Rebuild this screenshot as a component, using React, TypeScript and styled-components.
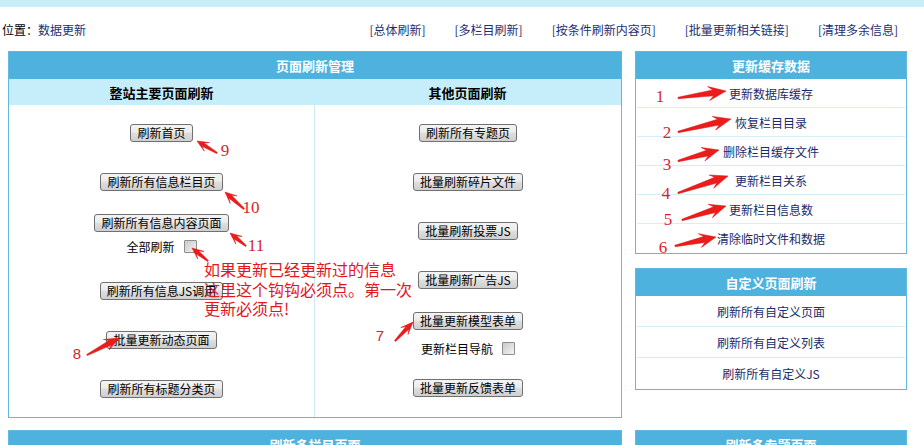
import React from "react";
import styled, { createGlobalStyle } from "styled-components";

const Global = createGlobalStyle`
  html, body { margin: 0; padding: 0; background: #fff; }
  body {
    font-family: "Noto Sans CJK SC", "Noto Sans", sans-serif;
    font-size: 12px;
    color: #000;
  }
`;

const Page = styled.div`
  position: relative;
  width: 924px;
  min-height: 445px;
  overflow: hidden;
`;

const TopBand = styled.div`
  height: 7px;
  background: #c8eef9;
`;

const LocationBar = styled.div`
  height: 44px;
  display: flex;
  align-items: center;
  justify-content: space-between;
  padding: 0 26px 0 2px;
`;

const Location = styled.div`
  font-size: 12px;
  color: #000;
`;

const NavLink = styled.a`
  color: #1a2f72;
  text-decoration: none;
  font-size: 12px;
  cursor: pointer;
`;

const Nav = styled.nav`
  display: flex;
  gap: 29px;
`;

const Row = styled.div<{ $gap?: number }>`
  display: flex;
  align-items: flex-start;
  gap: 13px;
  padding-left: 8px;
  margin-top: ${(p) => p.$gap ?? 0}px;
`;

const Panel = styled.section<{ $w: number }>`
  width: ${(p) => p.$w}px;
  box-sizing: border-box;
  border: 1px solid #62b8de;
  background: #fff;
`;

const PanelHeader = styled.div`
  height: 27px;
  background: #4eb2de;
  color: #fff;
  font-weight: bold;
  font-size: 13px;
  display: flex;
  align-items: center;
  justify-content: center;
`;

const SubHeaderRow = styled.div`
  height: 26px;
  background: #c6edfa;
  display: grid;
  grid-template-columns: 305px 1fr;
`;

const SubHead = styled.div`
  display: flex;
  align-items: center;
  justify-content: center;
  font-weight: bold;
  font-size: 13px;
`;

const Columns = styled.div`
  display: grid;
  grid-template-columns: 305px 1fr;
  height: 312px;
`;

const Column = styled.div<{ $divider?: boolean }>`
  display: flex;
  flex-direction: column;
  align-items: center;
  border-left: ${(p) => (p.$divider ? "1px solid #cfe9f4" : "none")};
`;

const Slot = styled.div<{ $gap: number }>`
  margin-top: ${(p) => p.$gap}px;
  display: flex;
  justify-content: center;
`;

const Btn = styled.button`
  height: 18px;
  padding: 0 6px;
  font-family: "Noto Sans CJK SC", sans-serif;
  font-size: 12px;
  line-height: 16px;
  color: #000;
  border: 1px solid #707070;
  border-radius: 3px;
  background: linear-gradient(#f4f4f4, #ececec 45%, #dedede 52%, #cfcfcf);
  white-space: nowrap;
  cursor: pointer;
`;

const CheckRow = styled.label`
  display: flex;
  align-items: center;
  gap: 9px;
  font-size: 12px;
  height: 16px;
`;

const Box = styled.input`
  appearance: none;
  margin: 0;
  width: 13px;
  height: 13px;
  box-sizing: border-box;
  border: 1px solid #8d8d8d;
  border-radius: 1px;
  background: linear-gradient(135deg, #c9c9c9, #f4f4f4);
`;

const SideStack = styled.div`
  display: flex;
  flex-direction: column;
  gap: 14px;
`;

const SideRow = styled.div<{ $h: number }>`
  height: ${(p) => p.$h}px;
  box-sizing: border-box;
  display: flex;
  align-items: center;
  justify-content: center;
  margin: 0 1px;
  border-bottom: 1px solid #d6eef7;
  &:last-child { border-bottom: none; }
`;

const SideLink = styled.a`
  color: #1a2b6a;
  font-size: 12px;
  text-decoration: none;
  cursor: pointer;
`;

const Stub = styled.div`
  height: 80px;
`;

const Annotations = styled.div`
  position: absolute;
  inset: 0;
  pointer-events: none;
  z-index: 2;
`;

const ArrowLayer = styled.svg`
  position: absolute;
  left: 0;
  top: 0;
`;

const Num = styled.span<{ $x: number; $y: number; $sans?: boolean }>`
  position: absolute;
  left: ${(p) => p.$x}px;
  top: ${(p) => p.$y}px;
  transform: translate(-50%, -50%);
  font-family: ${(p) => (p.$sans ? '"Liberation Sans", sans-serif' : '"Liberation Serif", serif')};
  font-size: ${(p) => (p.$sans ? 15 : 17)}px;
  line-height: 1;
  color: #d91f29;
`;

const Note = styled.div`
  position: absolute;
  left: 204px;
  top: 260px;
  font-size: 16px;
  line-height: 19.5px;
  color: #e3161f;
  white-space: pre;
`;

type Pt = [number, number];

function arrowPoints(t: Pt, p: Pt, hl: number, hw: number, sw: number): string {
  const dx = p[0] - t[0];
  const dy = p[1] - t[1];
  const L = Math.hypot(dx, dy);
  const ux = dx / L;
  const uy = dy / L;
  const nx = -uy;
  const ny = ux;
  const bx = p[0] - ux * hl;
  const by = p[1] - uy * hl;
  const pts: Pt[] = [
    [t[0] + nx * 0.7, t[1] + ny * 0.7],
    [bx + ux * 3 + nx * sw, by + uy * 3 + ny * sw],
    [bx - ux * 1.5 + nx * hw, by - uy * 1.5 + ny * hw],
    [p[0], p[1]],
    [bx - ux * 1.5 - nx * hw, by - uy * 1.5 - ny * hw],
    [bx + ux * 3 - nx * sw, by + uy * 3 - ny * sw],
    [t[0] - nx * 0.7, t[1] - ny * 0.7],
  ];
  return pts.map((q) => `${q[0].toFixed(1)},${q[1].toFixed(1)}`).join(" ");
}

const arrows: { t: Pt; p: Pt; hl: number; hw: number; sw: number }[] = [
  { t: [678, 98], p: [726, 91], hl: 16, hw: 7, sw: 3 },
  { t: [678, 132], p: [731, 119], hl: 16, hw: 7, sw: 3 },
  { t: [678, 161], p: [719, 150], hl: 15, hw: 7, sw: 3 },
  { t: [678, 193], p: [728, 176], hl: 16, hw: 7, sw: 3 },
  { t: [682, 220], p: [726, 206], hl: 15, hw: 7, sw: 3 },
  { t: [675, 246], p: [716, 237], hl: 15, hw: 7, sw: 3 },
  { t: [217, 153], p: [197, 141], hl: 10, hw: 5, sw: 2 },
  { t: [244, 209], p: [225, 192], hl: 10, hw: 5, sw: 2 },
  { t: [246, 246], p: [230, 233], hl: 10, hw: 5, sw: 2 },
  { t: [208, 261], p: [192, 248], hl: 10, hw: 5, sw: 2 },
  { t: [87, 355], p: [119, 338], hl: 13, hw: 6, sw: 2.5 },
  { t: [395, 341], p: [413, 322], hl: 11, hw: 5, sw: 2 },
];

const nums: { n: string; x: number; y: number; sans?: boolean }[] = [
  { n: "1", x: 660, y: 96 },
  { n: "2", x: 667, y: 132 },
  { n: "3", x: 667, y: 164 },
  { n: "4", x: 666, y: 193 },
  { n: "5", x: 668, y: 219 },
  { n: "6", x: 663, y: 247 },
  { n: "9", x: 225, y: 150 },
  { n: "10", x: 251, y: 207 },
  { n: "11", x: 256, y: 245 },
  { n: "8", x: 77, y: 353, sans: true },
  { n: "7", x: 380, y: 335, sans: true },
];

const navItems = ["[总体刷新]", "[多栏目刷新]", "[按条件刷新内容页]", "[批量更新相关链接]", "[清理多余信息]"];

const cacheItems = ["更新数据库缓存", "恢复栏目目录", "删除栏目缓存文件", "更新栏目关系", "更新栏目信息数", "清除临时文件和数据"];
const customItems = ["刷新所有自定义页面", "刷新所有自定义列表", "刷新所有自定义JS"];

export default function App() {
  return (
    <Page>
      <Global />
      <TopBand />
      <LocationBar>
        <Location>
          位置：<NavLink>数据更新</NavLink>
        </Location>
        <Nav>
          {navItems.map((n) => (
            <NavLink key={n}>{n}</NavLink>
          ))}
        </Nav>
      </LocationBar>

      <Row>
        <Panel $w={614}>
          <PanelHeader>页面刷新管理</PanelHeader>
          <SubHeaderRow>
            <SubHead>整站主要页面刷新</SubHead>
            <SubHead>其他页面刷新</SubHead>
          </SubHeaderRow>
          <Columns>
            <Column>
              <Slot $gap={19}><Btn>刷新首页</Btn></Slot>
              <Slot $gap={31}><Btn>刷新所有信息栏目页</Btn></Slot>
              <Slot $gap={23}><Btn>刷新所有信息内容页面</Btn></Slot>
              <Slot $gap={6}>
                <CheckRow>全部刷新<Box type="checkbox" /></CheckRow>
              </Slot>
              <Slot $gap={28}><Btn>刷新所有信息JS调用</Btn></Slot>
              <Slot $gap={31}><Btn>批量更新动态页面</Btn></Slot>
              <Slot $gap={31}><Btn>刷新所有标题分类页</Btn></Slot>
            </Column>
            <Column $divider>
              <Slot $gap={19}><Btn>刷新所有专题页</Btn></Slot>
              <Slot $gap={31}><Btn>批量刷新碎片文件</Btn></Slot>
              <Slot $gap={31}><Btn>批量刷新投票JS</Btn></Slot>
              <Slot $gap={31}><Btn>批量刷新广告JS</Btn></Slot>
              <Slot $gap={23}><Btn>批量更新模型表单</Btn></Slot>
              <Slot $gap={10}>
                <CheckRow>更新栏目导航<Box type="checkbox" /></CheckRow>
              </Slot>
              <Slot $gap={23}><Btn>批量更新反馈表单</Btn></Slot>
            </Column>
          </Columns>
        </Panel>

        <SideStack>
          <Panel $w={272}>
            <PanelHeader>更新缓存数据</PanelHeader>
            {cacheItems.map((c) => (
              <SideRow key={c} $h={29}>
                <SideLink>{c}</SideLink>
              </SideRow>
            ))}
          </Panel>
          <Panel $w={272}>
            <PanelHeader>自定义页面刷新</PanelHeader>
            {customItems.map((c) => (
              <SideRow key={c} $h={31}>
                <SideLink>{c}</SideLink>
              </SideRow>
            ))}
          </Panel>
        </SideStack>
      </Row>

      <Row $gap={12}>
        <Panel $w={614}>
          <PanelHeader>刷新多栏目页面</PanelHeader>
          <Stub />
        </Panel>
        <Panel $w={272}>
          <PanelHeader>刷新多专题页面</PanelHeader>
          <Stub />
        </Panel>
      </Row>

      <Annotations>
        <ArrowLayer width="924" height="445" viewBox="0 0 924 445">
          {arrows.map((a, i) => (
            <polygon key={i} points={arrowPoints(a.t, a.p, a.hl, a.hw, a.sw)} fill="#ee1b1b" stroke="#d01010" strokeWidth="0.5" strokeLinejoin="round" />
          ))}
        </ArrowLayer>
        {nums.map((n) => (
          <Num key={n.n} $x={n.x} $y={n.y} $sans={n.sans}>
            {n.n}
          </Num>
        ))}
        <Note>{"如果更新已经更新过的信息\n这里这个钩钩必须点。第一次\n更新必须点!"}</Note>
      </Annotations>
    </Page>
  );
}
